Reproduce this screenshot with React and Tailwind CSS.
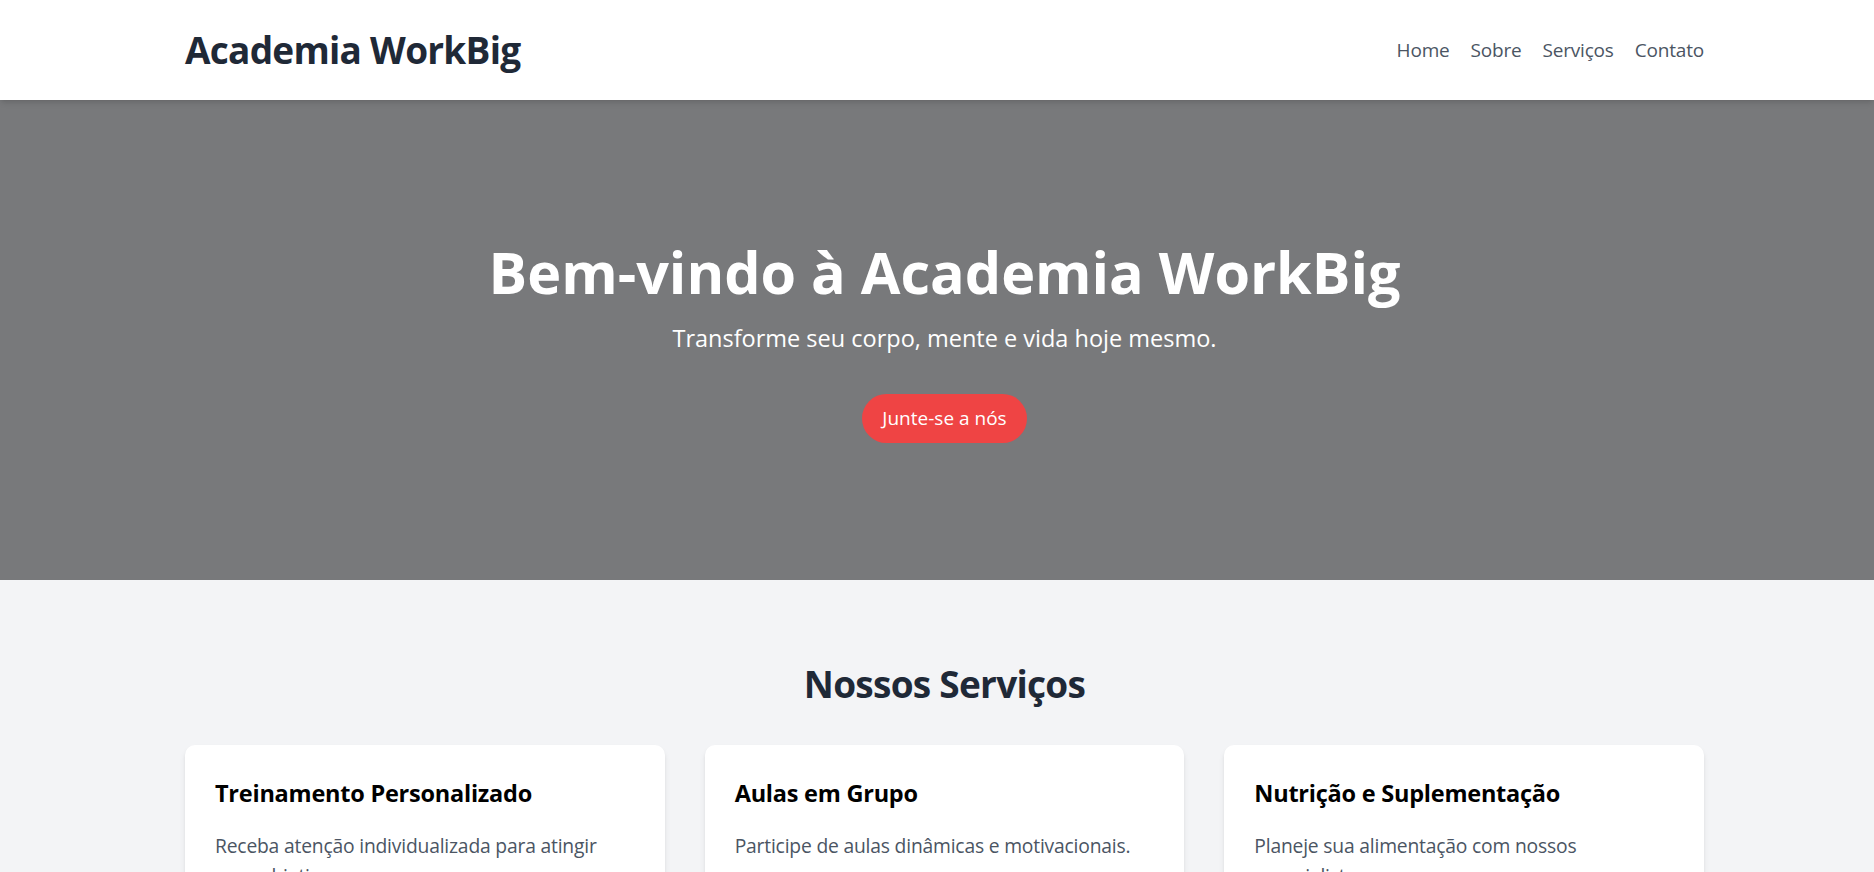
import React from "react";

const services = [
  {
    title: "Treinamento Personalizado",
    desc: "Receba atenção individualizada para atingir seus objetivos.",
  },
  {
    title: "Aulas em Grupo",
    desc: "Participe de aulas dinâmicas e motivacionais.",
  },
  {
    title: "Nutrição e Suplementação",
    desc: "Planeje sua alimentação com nossos especialistas.",
  },
];

const App = () => {
  return (
    <div className="min-h-screen bg-[#f3f4f6] font-['Open_Sans',sans-serif]">
      <header className="relative z-10 bg-white shadow-md">
        <div className="w-[1519px] ml-[185px] h-[100px] flex items-center justify-between">
          <h1 className="text-[37px] leading-[50px] tracking-[-0.02em] font-bold text-[#1f2937]">Academia WorkBig</h1>
          <nav className="flex gap-[21px] text-[19px] leading-[28px] tracking-[-0.01em] text-[#4b5563]">
            <a href="#">Home</a>
            <a href="#">Sobre</a>
            <a href="#">Serviços</a>
            <a href="#">Contato</a>
          </nav>
        </div>
      </header>

      <section className="bg-[#78797b] py-[137px]">
        <div className="w-[1519px] ml-[185px] flex flex-col items-center text-white">
          <h2 className="text-[57.5px] leading-[70px] font-bold">Bem-vindo à Academia WorkBig</h2>
          <p className="mt-[15px] text-[23.5px] leading-[32px]">Transforme seu corpo, mente e vida hoje mesmo.</p>
          <button className="mt-[40px] h-[49px] px-[20px] rounded-full bg-[#ef4444] text-[19px] leading-[27px] text-white">
            Junte-se a nós
          </button>
        </div>
      </section>

      <section className="pt-[80px] pb-[80px]">
        <div className="w-[1519px] ml-[185px]">
          <h2 className="text-center text-[37px] leading-[48px] tracking-[-0.02em] font-bold text-[#1f2937]">Nossos Serviços</h2>
          <div className="mt-[37px] grid grid-cols-3 gap-10">
            {services.map((item, index) => (
              <div key={index} className="bg-white rounded-[10px] shadow-md p-[30px]">
                <h3 className="text-[23.5px] leading-[36px] tracking-[-0.01em] font-bold text-black">{item.title}</h3>
                <p className="mt-[20px] text-[19.3px] leading-[30px] tracking-[-0.01em] text-[#4b5563]">{item.desc}</p>
              </div>
            ))}
          </div>
        </div>
      </section>
    </div>
  );
};

export default App;
